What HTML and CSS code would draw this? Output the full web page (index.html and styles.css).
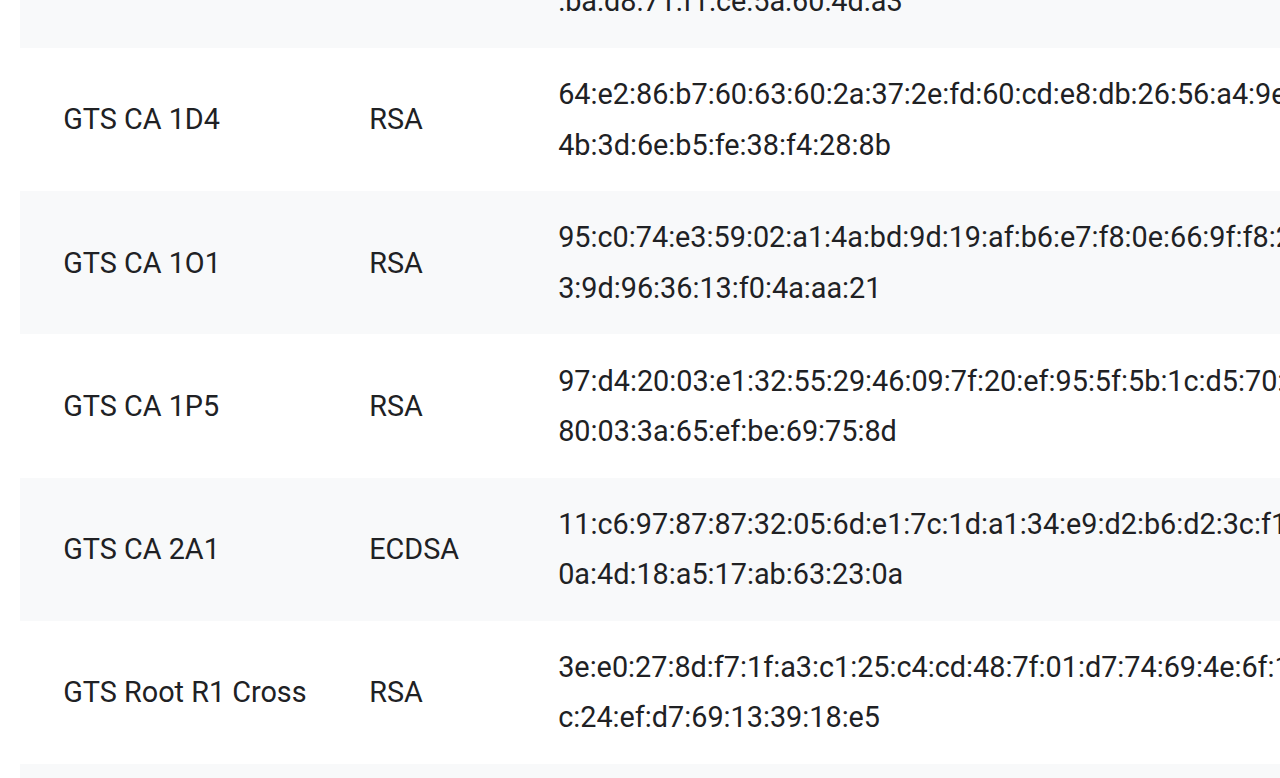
FILE: index.html
```html
<!DOCTYPE html>
<html lang="en">
<head>
<meta charset="utf-8">
<title>Subordinate CAs</title>
<link rel="stylesheet" href="styles.css">
</head>
<body>
<div class="page">
  <table class="certs">
    <colgroup>
      <col class="c-name">
      <col class="c-algo">
      <col class="c-fp">
    </colgroup>
    <tbody>
      <tr>
        <td class="name">GTS CA 1C3</td>
        <td class="algo">RSA</td>
        <td class="fp"><div class="fp-text">a1:b2:03:d4:05:06:07:18:29:3a:4b:5c:6d:7e:8f:90:a1:b2:c3:d4:e5:06:07:ba:d8:71:f1:ce:5a:60:4d:a3</div></td>
      </tr>
      <tr>
        <td class="name">GTS CA 1D4</td>
        <td class="algo">RSA</td>
        <td class="fp"><div class="fp-text">64:e2:86:b7:60:63:60:2a:37:2e:fd:60:cd:e8:db:26:56:a4:9e:3f:a0:1c:77:4b:3d:6e:b5:fe:38:f4:28:8b</div></td>
      </tr>
      <tr>
        <td class="name">GTS CA 1O1</td>
        <td class="algo">RSA</td>
        <td class="fp"><div class="fp-text">95:c0:74:e3:59:02:a1:4a:bd:9d:19:af:b6:e7:f8:0e:66:9f:f8:2d:71:c5:9f:e3:9d:96:36:13:f0:4a:aa:21</div></td>
      </tr>
      <tr>
        <td class="name">GTS CA 1P5</td>
        <td class="algo">RSA</td>
        <td class="fp"><div class="fp-text">97:d4:20:03:e1:32:55:29:46:09:7f:20:ef:95:5f:5b:1c:d5:70:b2:6e:14:c9:80:03:3a:65:ef:be:69:75:8d</div></td>
      </tr>
      <tr>
        <td class="name">GTS CA 2A1</td>
        <td class="algo">ECDSA</td>
        <td class="fp"><div class="fp-text">11:c6:97:87:87:32:05:6d:e1:7c:1d:a1:34:e9:d2:b6:d2:3c:f1:58:0b:fa:e4:0a:4d:18:a5:17:ab:63:23:0a</div></td>
      </tr>
      <tr>
        <td class="name">GTS Root R1 Cross</td>
        <td class="algo">RSA</td>
        <td class="fp"><div class="fp-text">3e:e0:27:8d:f7:1f:a3:c1:25:c4:cd:48:7f:01:d7:74:69:4e:6f:12:b8:46:f7:dc:24:ef:d7:69:13:39:18:e5</div></td>
      </tr>
      <tr>
        <td class="name">GTS Y1</td>
        <td class="algo">RSA</td>
        <td class="fp"><div class="fp-text">5c:2b:91:e4:07:a8:36:d1:4f:82:9a:c0:13:b7:6e:28:f4:50:d9:1a:63:c5:8e:07:b4:29:d6:71:0c:e8:3f:52</div></td>
      </tr>
    </tbody>
  </table>
</div>
</body>
</html>
```
FILE: styles.css
```css
html, body {
  margin: 0;
  padding: 0;
  overflow: hidden;
  background: #ffffff;
}

body {
  font-family: Roboto, "Liberation Sans", Arial, sans-serif;
  color: #202124;
}

.page {
  padding-left: 20px;
}

.certs {
  border-collapse: collapse;
  table-layout: fixed;
  width: 1471.4px;
  margin-top: -95.2px;
}

.c-name { width: 306px; }
.c-algo { width: 189px; }
.c-fp { width: 976.4px; }

.certs tr:nth-child(odd) {
  background: #f8f9fa;
}

.certs td {
  padding: 21.2px 43.2px;
  font-size: 28.8px;
  line-height: 50.4px;
  vertical-align: middle;
  text-align: left;
  white-space: nowrap;
}

.certs td.fp {
  white-space: normal;
}

.fp-text {
  width: 890px;
  word-break: normal;
  overflow-wrap: anywhere;
}
```
